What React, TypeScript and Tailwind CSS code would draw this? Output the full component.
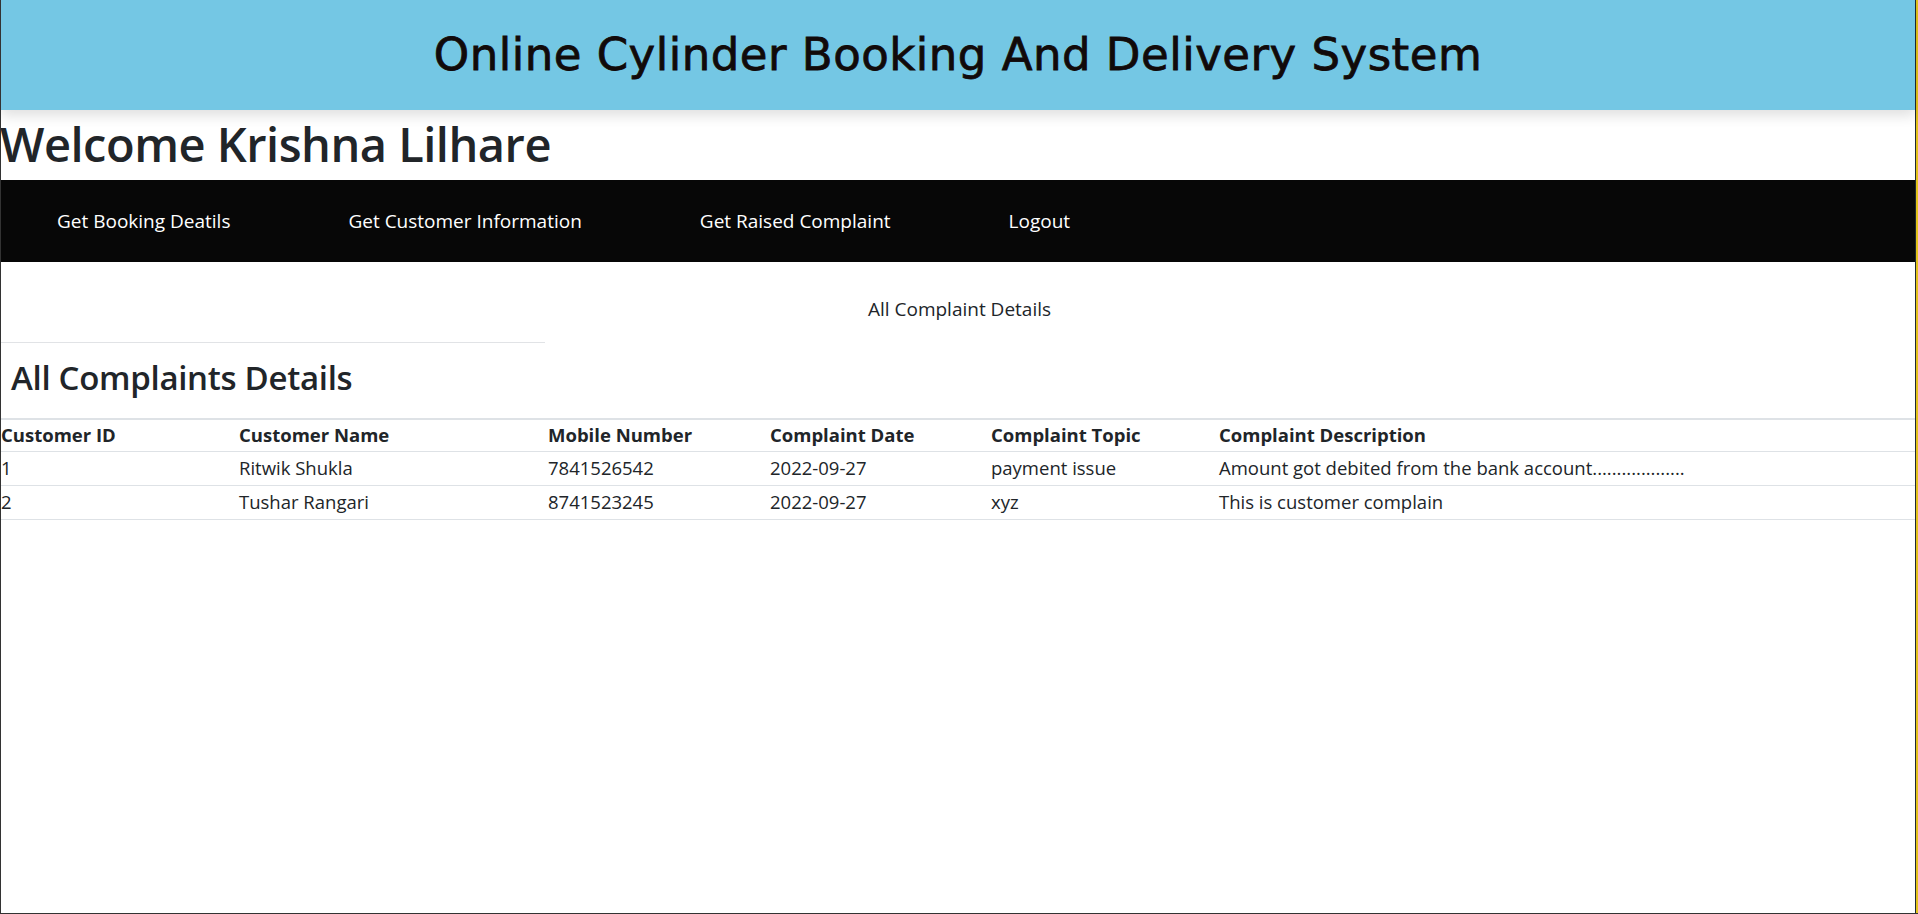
import React from "react";

const complaints = [
  {
    id: "1",
    name: "Ritwik Shukla",
    mobile: "7841526542",
    date: "2022-09-27",
    topic: "payment issue",
    description: "Amount got debited from the bank account...................",
  },
  {
    id: "2",
    name: "Tushar Rangari",
    mobile: "8741523245",
    date: "2022-09-27",
    topic: "xyz",
    description: "This is customer complain",
  },
];

const navLinks = ["Get Booking Deatils", "Get Customer Information", "Get Raised Complaint", "Logout"];

export default function App() {
  return (
    <div className="h-[914px] w-full overflow-hidden bg-white border-l border-b border-[#333] shadow-[inset_-2px_0_0_#e3c31a,inset_-3px_0_0_#1f2a33] font-['Open_Sans',sans-serif] text-[#212529]">
      {/* Title Banner */}
      <header className="relative z-10 h-[110px] mr-[3px] flex items-center justify-center bg-[#74c7e4] shadow-[0_6px_12px_rgba(0,0,0,0.12)]">
        <h1 className="font-['Comic_Sans_MS','DejaVu_Sans',sans-serif] text-[45px] text-[#110a0a] tracking-[0.5px] [-webkit-text-stroke:0.8px_#110a0a]">
          Online Cylinder Booking And Delivery System
        </h1>
      </header>

      <h2 className="h-[70px] flex items-center pb-[2px] text-[47px] font-semibold leading-none tracking-[-0.5px] -ml-[1px]">
        Welcome Krishna Lilhare
      </h2>

      {/* Nav */}
      <nav className="h-[82px] mr-[3px] flex items-center bg-[#070707] pl-[56px] gap-[118px]">
        {navLinks.map((link) => (
          <a key={link} href="#" className="text-white text-[19px]">
            {link}
          </a>
        ))}
      </nav>

      <p className="mt-[32px] text-center text-[19px] leading-[30px]">All Complaint Details</p>

      <hr className="mt-[18px] w-[544px] border-t border-[#e1e3e6]" />

      <h3 className="mt-[14px] ml-[10px] text-[33px] font-semibold leading-[42px] tracking-[-0.3px]">All Complaints Details</h3>

      <table className="mt-[19px] mr-[3px] w-[1914px] border-t-2 border-[#dee2e6] text-[18.5px] leading-[24px] table-fixed">
        <thead>
          <tr className="border-b border-[#dee2e6] h-[32px] text-left">
            <th className="w-[238px] font-bold p-0">Customer ID</th>
            <th className="w-[309px] font-bold p-0">Customer Name</th>
            <th className="w-[222px] font-bold p-0">Mobile Number</th>
            <th className="w-[221px] font-bold p-0">Complaint Date</th>
            <th className="w-[228px] font-bold p-0">Complaint Topic</th>
            <th className="font-bold p-0">Complaint Description</th>
          </tr>
        </thead>
        <tbody>
          {complaints.map((c) => (
            <tr key={c.id} className="border-b border-[#dee2e6] h-[34px]">
              <td className="p-0">{c.id}</td>
              <td className="p-0">{c.name}</td>
              <td className="p-0">{c.mobile}</td>
              <td className="p-0">{c.date}</td>
              <td className="p-0">{c.topic}</td>
              <td className="p-0">{c.description}</td>
            </tr>
          ))}
        </tbody>
      </table>
    </div>
  );
}
